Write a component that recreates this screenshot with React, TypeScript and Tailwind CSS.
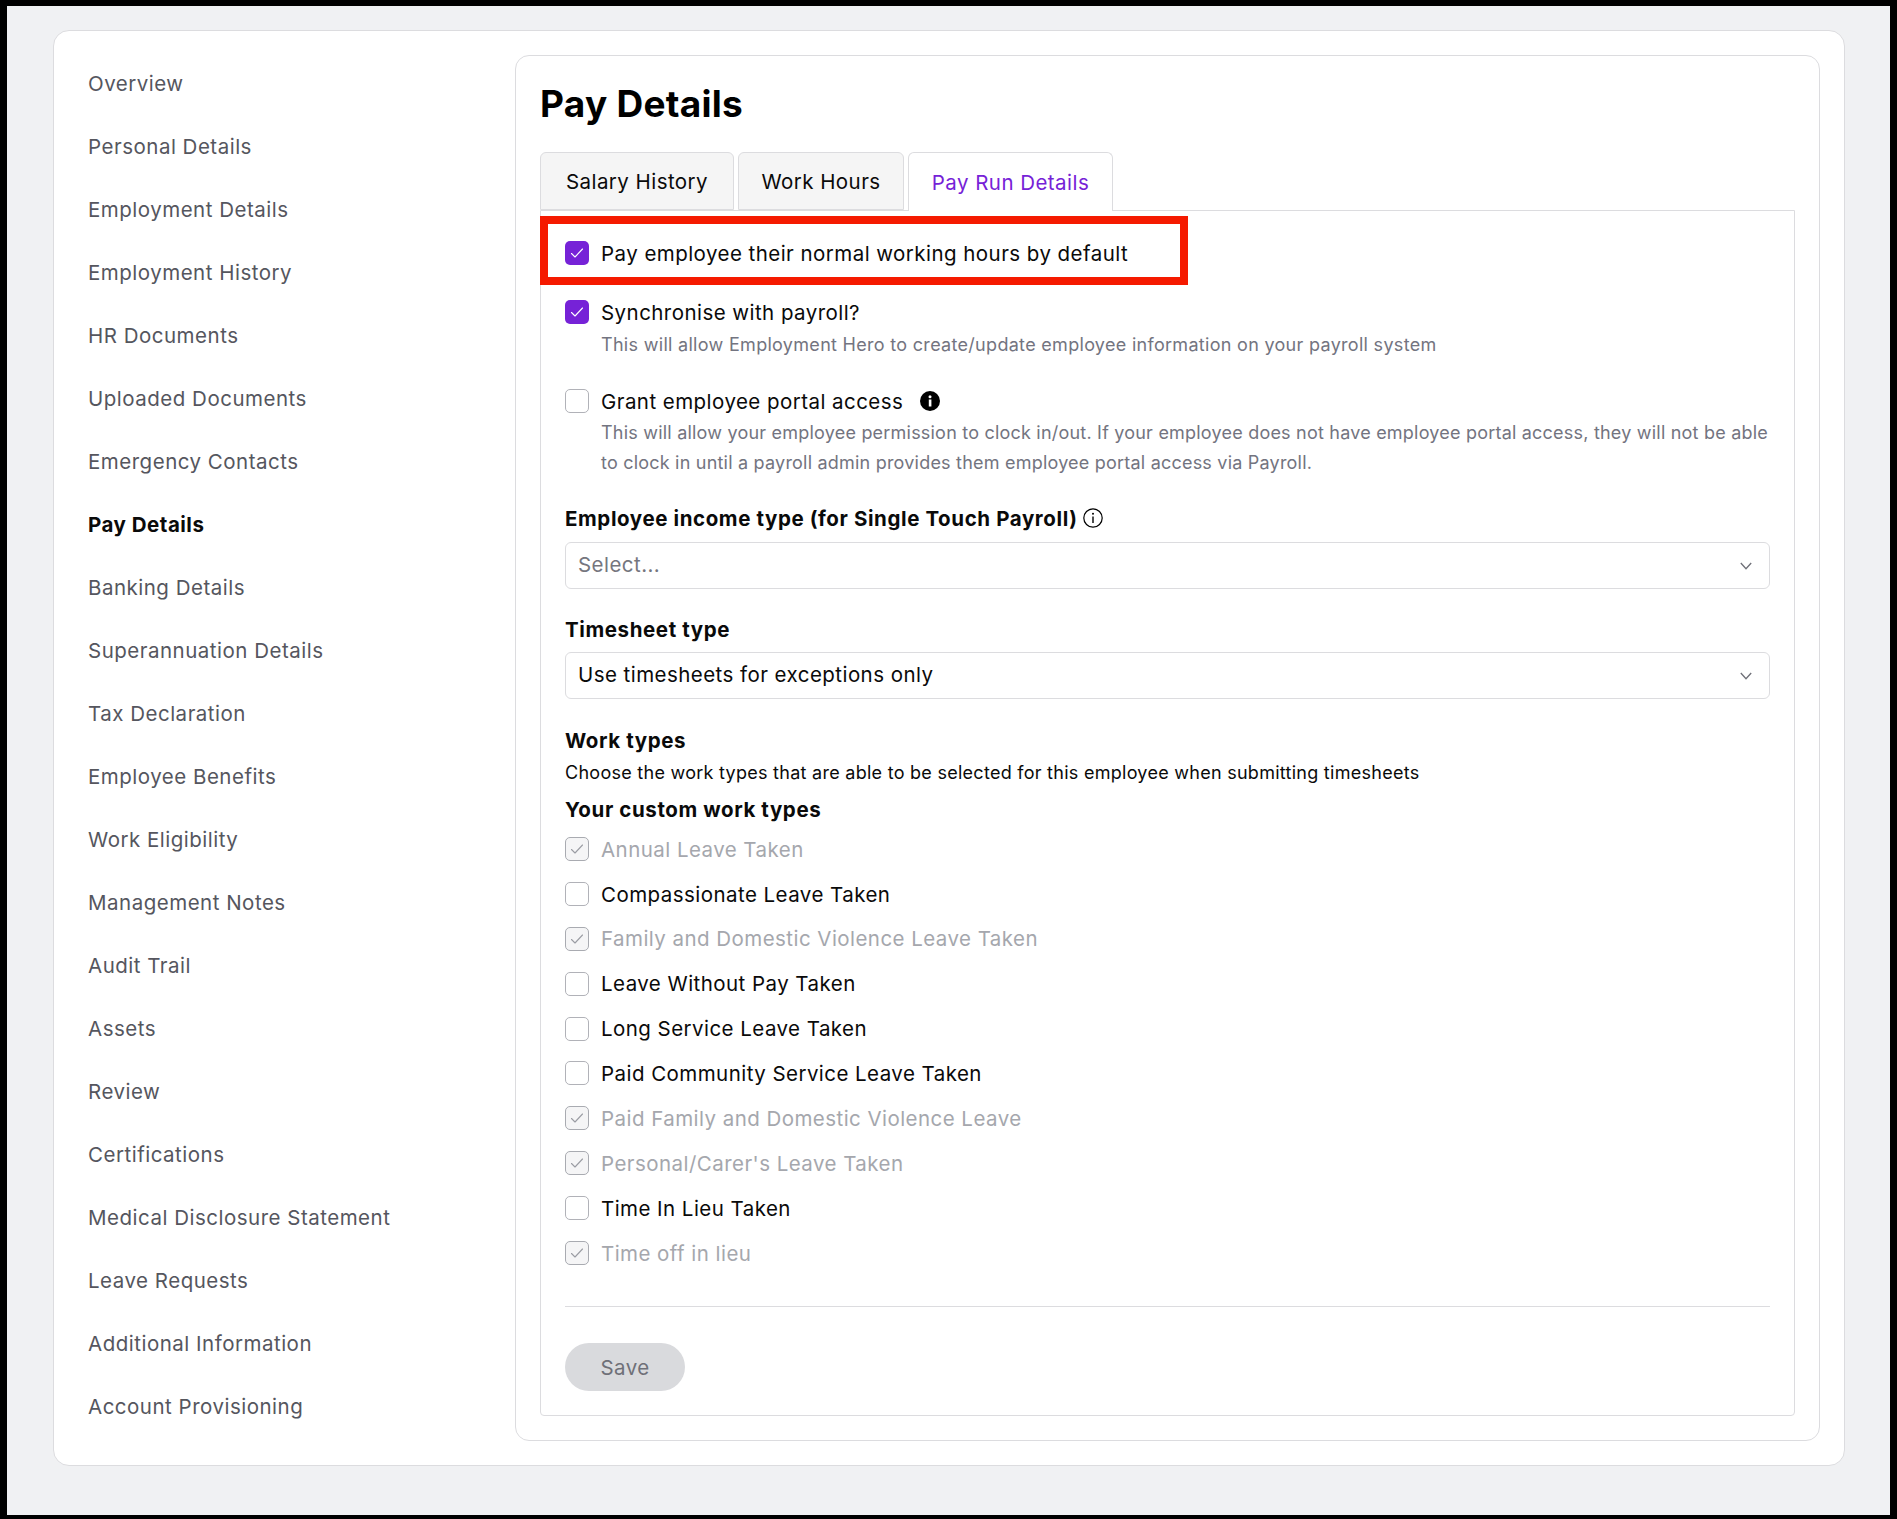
const nav = ["Overview","Personal Details","Employment Details","Employment History","HR Documents","Uploaded Documents","Emergency Contacts","Pay Details","Banking Details","Superannuation Details","Tax Declaration","Employee Benefits","Work Eligibility","Management Notes","Audit Trail","Assets","Review","Certifications","Medical Disclosure Statement","Leave Requests","Additional Information","Account Provisioning"];
const work: [string, boolean][] = [["Annual Leave Taken",true],["Compassionate Leave Taken",false],["Family and Domestic Violence Leave Taken",true],["Leave Without Pay Taken",false],["Long Service Leave Taken",false],["Paid Community Service Leave Taken",false],["Paid Family and Domestic Violence Leave",true],["Personal/Carer's Leave Taken",true],["Time In Lieu Taken",false],["Time off in lieu",true]];

function Tick({ color }: { color: string }) {
  return (
    <svg width="14" height="12" viewBox="0 0 14 12" fill="none">
      <path d="M1.5 6.5 L5 10 L12.5 2" stroke={color} strokeWidth="1.1" strokeLinecap="round" strokeLinejoin="round" />
    </svg>
  );
}
function Box({ kind }: { kind: "on" | "off" | "disabled" }) {
  if (kind === "on") return <span className="flex h-6 w-6 shrink-0 items-center justify-center rounded-[5px] bg-[#7622d7]"><Tick color="#ffffff" /></span>;
  if (kind === "disabled") return <span className="flex h-6 w-6 shrink-0 items-center justify-center rounded-[5px] border border-[#a9abb1] bg-[#f5f5f6]"><Tick color="#9a9ca3" /></span>;
  return <span className="h-6 w-6 shrink-0 rounded-[5px] border border-[#b1b2b8] bg-white" />;
}
function Chevron() {
  return (
    <svg width="12" height="8" viewBox="0 0 12 8" fill="none">
      <path d="M0.8 1 L6 6.8 L11.2 1" stroke="#6f7078" strokeWidth="1.3" />
    </svg>
  );
}
function Select({ text, muted, className }: { text: string; muted?: boolean; className: string }) {
  return (
    <div className={`flex h-[47px] items-center justify-between rounded-[6px] border border-[#dcdcdf] bg-white pl-3 pr-[17px] ${className}`}>
      <span className={`text-[20.5px] tracking-[0.45px] ${muted ? "text-[#75767e]" : "text-[#0a0a0a]"}`}>{text}</span>
      <Chevron />
    </div>
  );
}
const body = "text-[20.5px] tracking-[0.45px]";

export default function App() {
  return (
    <div className="h-[1519px] w-[1897px] border-t-[6px] border-r-[7px] border-b-[4px] border-l-[7px] border-black bg-[#f0f1f3] pt-6 pl-[46px] font-['Inter',sans-serif] text-[#0a0a0a]">
      <div className="flex h-[1436px] w-[1792px] rounded-[16px] border border-[#dcdcdf] bg-white pt-6 pr-6 pb-6">
        <nav className="w-[461px] shrink-0 -mt-[2px] pl-[34px]">
          {nav.map((n) => (
            <div key={n} className={`flex h-[63px] items-center text-[20.5px] tracking-[0.5px] ${n === "Pay Details" ? "font-bold text-[#0a0a0a]" : "text-[#55565e]"}`}>{n}</div>
          ))}
        </nav>
        <main className="relative h-[1386px] w-[1306px] rounded-[14px] border border-[#dcdcdf] px-6">
          <h1 className="mt-[25px] h-[46px] text-[37px] leading-[46px] tracking-[0.27px] font-bold text-black">Pay Details</h1>
          <div className="mt-[25px] flex h-[58px] gap-1">
            <div className={`flex h-[58px] w-[194px] items-center justify-center rounded-t-[6px] border border-[#dcdcdf] bg-[#f5f5f5] pt-[2px] ${body}`}>Salary History</div>
            <div className={`flex h-[58px] w-[166px] items-center justify-center rounded-t-[6px] border border-[#dcdcdf] bg-[#f5f5f5] pt-[2px] ${body}`}>Work Hours</div>
            <div className={`z-10 flex h-[59px] w-[205px] items-center justify-center rounded-t-[6px] border border-b-0 border-[#dcdcdf] bg-white pt-[2px] text-[#7622d7] ${body}`}>Pay Run Details</div>
          </div>
          <section className="h-[1206px] rounded-b-[4px] border border-[#dcdcdf] px-6 pt-[30px]">
            <div className="flex h-6 items-center gap-3">
              <Box kind="on" />
              <span className={`pt-[2px] ${body}`}>Pay employee their normal working hours by default</span>
            </div>
            <div className="mt-[35px] flex h-6 items-center gap-3">
              <Box kind="on" />
              <span className={`pt-[2px] ${body}`}>Synchronise with payroll?</span>
            </div>
            <p className="mt-[5px] pl-9 text-[18px] leading-[32px] tracking-[0.3px] text-[#737480]">This will allow Employment Hero to create/update employee information on your payroll system</p>
            <div className="mt-[28px] flex h-6 items-center gap-3">
              <Box kind="off" />
              <span className={`pt-[2px] ${body}`}>Grant employee portal access</span>
              <svg className="ml-[5px]" width="20" height="20" viewBox="0 0 20 20">
                <circle cx="10" cy="10" r="10" fill="#000" />
                <rect x="8.8" y="8.5" width="2.6" height="7" fill="#fff" />
                <circle cx="10" cy="5.8" r="1.5" fill="#fff" />
              </svg>
            </div>
            <p className="mt-[5px] pl-9 text-[18px] leading-[30px] tracking-[0.21px] text-[#737480]">This will allow your employee permission to clock in/out. If your employee does not have employee portal access, they will not be able<br />to clock in until a payroll admin provides them employee portal access via Payroll.</p>
            <div className="mt-[28px] flex h-6 items-center gap-[6px]">
              <span className="pt-[2px] text-[20.5px] tracking-[0.6px] font-bold">Employee income type (for Single Touch Payroll)</span>
              <svg width="20" height="20" viewBox="0 0 20 20" fill="none">
                <circle cx="10" cy="10" r="9.2" stroke="#000" strokeWidth="1.2" />
                <path d="M10 8.5V15" stroke="#000" strokeWidth="1.4" />
                <circle cx="10" cy="5.7" r="1" fill="#000" />
              </svg>
            </div>
            <Select text="Select..." muted className="mt-3" />
            <div className="mt-[29px] h-6 text-[20.5px] leading-6 tracking-[0.6px] font-bold">Timesheet type</div>
            <Select text="Use timesheets for exceptions only" className="mt-[10px]" />
            <div className="mt-[30px] h-6 text-[20.5px] leading-6 tracking-[0.6px] font-bold">Work types</div>
            <p className="mt-[5px] text-[18px] leading-[30px] tracking-[0.27px] text-[#0a0a0a]">Choose the work types that are able to be selected for this employee when submitting timesheets</p>
            <div className="mt-[9px] h-6 text-[20.5px] leading-[26px] tracking-[0.6px] font-bold">Your custom work types</div>
            <div className="mt-4 flex flex-col gap-[20.9px]">
              {work.map(([t, d]) => (
                <div key={t} className="flex h-6 items-center gap-3">
                  <Box kind={d ? "disabled" : "off"} />
                  <span className={`pt-[2px] ${body} ${d ? "text-[#a5a7ad]" : ""}`}>{t}</span>
                </div>
              ))}
            </div>
            <div className="mt-[41px] h-px bg-[#dcdcdf]" />
            <div className={`mt-9 flex h-12 w-[120px] items-center justify-center rounded-full bg-[#d9dadd] pt-[2px] text-[#6f7078] ${body}`}>Save</div>
          </section>
          <div className="pointer-events-none absolute top-[160px] left-[24px] z-20 h-[69px] w-[648px] border-8 border-[#f51a00]" />
        </main>
      </div>
    </div>
  );
}
